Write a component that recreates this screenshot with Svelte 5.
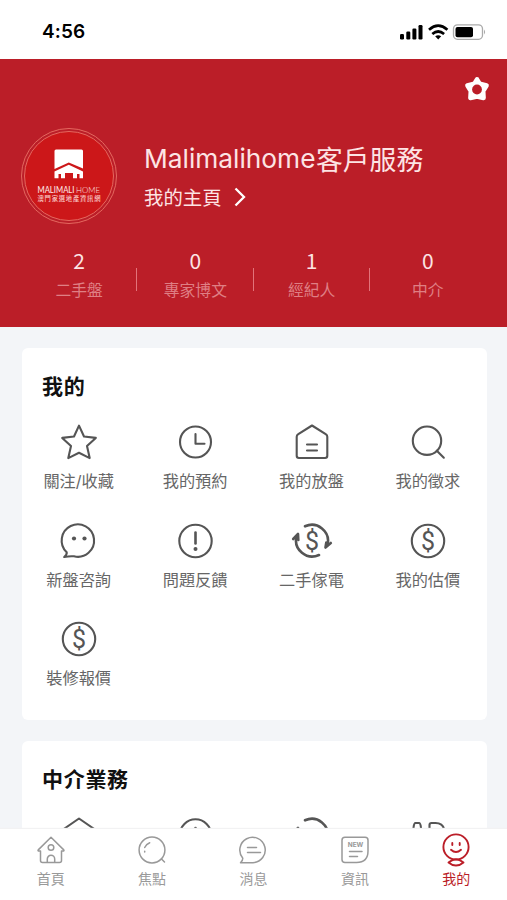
<script lang="ts">
  interface Entry {
    icon: string;
    label: string;
  }

  const stats = [
    { value: 2, label: "二手盤" },
    { value: 0, label: "專家博文" },
    { value: 1, label: "經紀人" },
    { value: 0, label: "中介" },
  ];

  const mine: Entry[] = [
    { icon: "star", label: "關注/收藏" },
    { icon: "clock", label: "我的預約" },
    { icon: "listing", label: "我的放盤" },
    { icon: "search", label: "我的徵求" },
    { icon: "chat", label: "新盤咨詢" },
    { icon: "alert", label: "問題反饋" },
    { icon: "recycle", label: "二手傢電" },
    { icon: "dollar", label: "我的估價" },
    { icon: "dollar", label: "裝修報價" },
  ];

  // only the top of this row shows above the tab bar
  const agency = ["roof", "agent", "cycle", "ad"];

  const tabs: Entry[] = [
    { icon: "home", label: "首頁" },
    { icon: "focus", label: "焦點" },
    { icon: "message", label: "消息" },
    { icon: "news", label: "資訊" },
    { icon: "me", label: "我的" },
  ];

  let active = $state("me");
</script>

{#snippet entryIcon(name: string)}
  <svg class="icon" viewBox="0 0 44 40">
    {#if name === "star"}
      <path d="M22 3.600l5 10.900 11.800 1.400-8.800 8.200 2.700 12L22 30.800l-10.700 5.300 2.700-12-8.800-8.200L17 14.500z" />
    {:else if name === "clock"}
      <circle cx="21.500" cy="20" r="15.500" />
      <path d="M21.500 12v9.800h9" />
    {:else if name === "listing"}
      <path d="M22 3.500L35.700 12.200q1.600 1 1.600 2.600v19q0 2.200-2.200 2.200H8.900q-2.200 0-2.200-2.200v-19q0-1.600 1.600-2.600z" />
      <path d="M17 22.500h10M17 28.500h10" />
    {:else if name === "roof"}
      <path d="M22 3.500L38 14.500v19H6v-19z" />
    {:else if name === "search"}
      <circle cx="21" cy="18.700" r="14.200" />
      <path d="M30.800 28.700l7 7" />
    {:else if name === "chat"}
      <path d="M9.700 31.300A16.200 16.200 0 1 1 17 35.300Q12 35 7.200 36q3-2.500 2.500-4.700z" />
      <circle class="dot" cx="17" cy="17.500" r="2.100" />
      <circle class="dot" cx="27.500" cy="17.500" r="2.100" />
    {:else if name === "alert"}
      <circle cx="21.500" cy="20" r="16.200" />
      <path class="thick" d="M21.500 11.500v11" />
      <circle class="dot" cx="21.500" cy="28" r="2" />
    {:else if name === "recycle"}
      <path class="thick" d="M15 5.300A16.200 16.200 0 0 1 37.600 23.500M29 34A16.200 16.200 0 0 1 6.500 15.500" />
      <path class="thick" d="M3.200 18l4.800-5 .3 6M35.500 26.500l.8-5M35.500 26.500l5.300-4.500" />
      <text x="22" y="28.800">$</text>
    {:else if name === "cycle"}
      <path class="thick" d="M15 5.300A16.200 16.200 0 0 1 37.600 23.500M3.200 18l4.800-5" />
    {:else if name === "dollar"}
      <circle cx="22" cy="20" r="16.200" />
      <text x="22" y="28.800">$</text>
    {:else if name === "agent"}
      <circle cx="21.500" cy="20" r="15.700" />
      <circle class="dot" cx="21.500" cy="13" r="1.300" />
    {:else if name === "ad"}
      <path d="M6 28l1.500-15q.5-5 2-5h3.500q1.500 0 2 5l1.500 15M23.500 28V10q0-2 2-2h4q8 0 9 8" />
    {/if}
  </svg>
{/snippet}

{#snippet tabIcon(name: string)}
  <svg class="tab-icon" viewBox="0 0 32 34">
    {#if name === "home"}
      <path d="M5.500 18H3.500q-1-.4 0-1.400L16 4.300l12.500 12.300q1 1 0 1.400h-2v9.500q0 2-2 2h-17q-2 0-2-2z" />
      <circle cx="16" cy="14.500" r="2.800" />
      <path d="M12.300 29v-3a3.700 3.700 0 0 1 7.400 0v3" />
    {:else if name === "focus"}
      <circle cx="16" cy="17" r="12.900" />
      <path d="M25.500 26l3 3M8.700 14.500a9 9 0 0 1 5-4.800M8.700 18.200v.8" />
    {:else if name === "message"}
      <path d="M5.800 25.200A12.700 12.700 0 1 1 16 29.700H3.500q2.300-2 2.300-4.500z" />
      <path d="M10.500 14.500h9M10.500 19.500h13" />
    {:else if name === "news"}
      <path d="M6 4.300h20q3 0 3 3V18q0 11.500-11.500 11.500H6q-3 0-3-3V7.300q0-3 3-3z" />
      <path d="M10.500 18.500h12.500M10.500 23.500h8" />
      <text x="16.500" y="14">NEW</text>
    {:else if name === "me"}
      <circle cx="16" cy="14" r="12.600" />
      <path d="M12.300 10v2M19.700 10v2M11 16.800q5 4.500 10 0" />
      <path d="M8.500 29.500Q13 26.300 16 26.300t7.500 3.200Q20 32.500 16 32.500t-7.500-3z" />
    {/if}
  </svg>
{/snippet}

<div class="screen">
  <div class="status">
    <span class="time">4:56</span>
    <svg class="signals" width="88" height="18" viewBox="0 0 88 18">
      <rect x="1" y="11" width="4" height="5.500" rx="1.200" />
      <rect x="7.300" y="8.500" width="4" height="8" rx="1.200" />
      <rect x="13.400" y="5.500" width="4" height="11" rx="1.200" />
      <rect x="19.500" y="2" width="4" height="14.500" rx="1.200" />
      <path class="wave" d="M30 6.700q9.200-8 18.400 0M33.300 11q5.900-5 11.800 0" />
      <path d="M36.200 13.300q3-2 6 0l-3 3.200z" />
      <rect class="case" x="54.500" y="1.800" width="29" height="14.500" rx="4" />
      <rect x="56.500" y="3.900" width="17.500" height="10.300" rx="2" />
      <path class="tip" d="M85 6.500q2.200 2.500 0 5z" />
    </svg>
  </div>

  <header>
    <div class="tools">
      <svg width="28" height="28" viewBox="0 0 28 28">
        <path class="gear" d="M14 4.300l2.600 4.400 7 1.800-3.400 5.500.4 7-6.600-1.500L7.400 23l.4-7-3.400-5.500 7-1.800z" />
        <circle class="hole" cx="14" cy="14.500" r="4.900" />
      </svg>
    </div>

    <div class="profile">
      <svg class="avatar" width="98" height="98" viewBox="0 0 98 98">
        <circle class="ring" cx="49" cy="49" r="47.500" />
        <circle class="disc" cx="49" cy="49" r="44.500" />
        <path class="mark" d="M36 22.500h25.500q1.500 0 1.500 1.500v17.500L48.800 35.500 34.500 42V24q0-1.500 1.500-1.500z" />
        <path class="mark" d="M34.500 44.500L48.800 37.700 63 44.500v6.800h-3.500V47H57v4.300h-4V46h-8v5.300h-4V47h-2.500v4.300h-4z" />
        <text class="brand" x="17.500" y="66" textLength="37" lengthAdjust="spacingAndGlyphs">MALIMALI</text>
        <text class="brand thin" x="56" y="66" textLength="24" lengthAdjust="spacingAndGlyphs">HOME</text>
        <text class="slogan" x="17.500" y="73.500" textLength="63">澳門家選地產資訊網</text>
      </svg>
      <div class="who">
        <div class="name"><span class="latin">Malimalihome</span><span>客戶服務</span></div>
        <div class="link">
          我的主頁
          <svg width="14" height="22" viewBox="0 0 14 22"><path d="M2.500 2.500l8.500 8.500-8.500 8.500" /></svg>
        </div>
      </div>
    </div>

    <div class="stats">
      {#each stats as stat (stat.label)}
        <div class="stat">
          <span class="value">{stat.value}</span>
          <span class="caption">{stat.label}</span>
        </div>
      {/each}
    </div>
  </header>

  <main>
    <section class="card">
      <h2>我的</h2>
      <div class="grid">
        {#each mine as entry (entry.label)}
          <div class="entry">
            {@render entryIcon(entry.icon)}
            <span>{entry.label}</span>
          </div>
        {/each}
      </div>
    </section>

    <section class="card">
      <h2>中介業務</h2>
      <div class="grid">
        {#each agency as icon (icon)}
          <div class="entry">{@render entryIcon(icon)}</div>
        {/each}
      </div>
    </section>
  </main>

  <nav>
    {#each tabs as tab (tab.icon)}
      <button class:active={active === tab.icon} onclick={() => (active = tab.icon)}>
        {@render tabIcon(tab.icon)}
        <span>{tab.label}</span>
      </button>
    {/each}
  </nav>
</div>

<style>
  :global(body) {
    margin: 0;
  }
  .screen {
    display: flex;
    flex-direction: column;
    height: 900px;
    overflow: hidden;
    background: #f3f5f8;
    font-family: Inter, "Noto Sans CJK TC", sans-serif;
  }
  svg {
    display: block;
    flex: none;
  }
  .status {
    display: flex;
    justify-content: space-between;
    align-items: center;
    box-sizing: border-box;
    flex: none;
    height: 59px;
    padding: 4px 20px 0 42px;
    background: #fff;
  }
  .time {
    font-size: 19px;
    font-weight: 600;
    letter-spacing: 0.1px;
  }
  .wave {
    fill: none;
    stroke: #000;
    stroke-width: 2.7;
  }
  .case {
    fill: none;
    stroke: #aaa;
    stroke-width: 1.3;
  }
  .tip {
    fill: #aaa;
  }
  header {
    box-sizing: border-box;
    flex: none;
    height: 268px;
    background: #bb1e28;
    color: #fde4e4;
  }
  .tools {
    display: flex;
    justify-content: flex-end;
    padding: 16px 16.5px 0 0;
  }
  .gear {
    fill: #fff;
    stroke: #fff;
    stroke-width: 4.5;
    stroke-linejoin: round;
  }
  .hole {
    fill: #bb1e28;
  }
  .profile {
    display: flex;
    gap: 26px;
    padding: 24px 0 0 20px;
  }
  .ring {
    fill: none;
    stroke: #e5685f;
    stroke-width: 1;
  }
  .disc {
    fill: #cc1719;
    stroke: #e5685f;
    stroke-width: 1;
  }
  .mark {
    fill: #fff;
  }
  .brand {
    fill: #fde4e4;
    font: 500 8.5px Lato, sans-serif;
  }
  .brand.thin {
    font-weight: 300;
  }
  .slogan {
    fill: #f9c9c5;
    font: 500 6.3px "Noto Sans CJK TC", sans-serif;
  }
  .who {
    padding-top: 13.5px;
  }
  .name {
    display: flex;
    align-items: center;
    height: 36px;
    font-size: 26.8px;
    white-space: nowrap;
  }
  .latin {
    width: 172px;
    font-size: 26.3px;
    letter-spacing: 0;
  }
  .link {
    display: flex;
    align-items: center;
    gap: 11px;
    height: 40px;
    font-size: 19.4px;
  }
  .link path {
    fill: none;
    stroke: #fff;
    stroke-width: 2.3;
  }
  .stats {
    display: grid;
    grid-template-columns: repeat(4, 1fr);
    padding: 21px 21px 0;
  }
  .stat {
    display: flex;
    flex-direction: column;
    align-items: center;
    position: relative;
  }
  .stat + .stat::before {
    content: "";
    position: absolute;
    left: -1px;
    top: 22px;
    width: 1px;
    height: 23px;
    background: #e2737a;
  }
  .value {
    font-size: 21px;
    line-height: 28px;
    font-family: "Noto Sans CJK TC", sans-serif;
  }
  .caption {
    font-size: 15.8px;
    line-height: 33px;
    color: #df7f84;
  }
  main {
    display: flex;
    flex-direction: column;
    flex: 1;
    gap: 21px;
    min-height: 0;
    overflow: hidden;
    padding: 21px 20.5px 0 21.5px;
  }
  .card {
    box-sizing: border-box;
    flex: none;
    height: 372px;
    border-radius: 6px;
    background: #fff;
  }
  h2 {
    margin: 0;
    padding: 23.5px 0 0 20.5px;
    font-size: 21px;
    font-weight: 700;
    line-height: 30px;
    letter-spacing: 0.7px;
    color: #111;
  }
  .grid {
    display: grid;
    grid-template-columns: repeat(4, 116.4px);
    grid-auto-rows: 98.7px;
    margin: 20.5px 0 0 -0.5px;
  }
  .entry {
    display: flex;
    flex-direction: column;
    align-items: center;
    font-size: 16.2px;
    line-height: 24px;
    gap: 7px;
    color: #666;
  }
  .entry span {
    margin-left: -1px;
  }
  .icon {
    width: 44px;
    height: 40px;
    fill: none;
    stroke: #555;
    stroke-width: 2.1;
    stroke-linecap: round;
    stroke-linejoin: round;
  }
  .icon text {
    fill: #555;
    stroke: none;
    font: 400 25px Roboto, sans-serif;
    text-anchor: middle;
  }
  .thick {
    stroke-width: 2.6;
  }
  .dot {
    fill: #555;
    stroke: none;
  }
  nav {
    display: grid;
    grid-template-columns: repeat(5, 1fr);
    box-sizing: border-box;
    flex: none;
    height: 71.5px;
    padding-top: 4.5px;
    background: #fff;
    box-shadow: 0 -1px 1px #f2f2f3;
  }
  button {
    display: flex;
    flex-direction: column;
    align-items: center;
    padding: 0;
    border: 0;
    background: none;
    color: #999;
    font: 14px/22px "Noto Sans CJK TC", sans-serif;
  }
  button.active {
    color: #bb1e28;
  }
  .tab-icon {
    width: 32px;
    height: 34px;
    fill: none;
    stroke: currentColor;
    stroke-width: 1.5;
    stroke-linecap: round;
    stroke-linejoin: round;
  }
  .active .tab-icon {
    stroke-width: 1.9;
  }
  .tab-icon text {
    fill: currentColor;
    stroke: none;
    font: 700 6.5px Inter, sans-serif;
    text-anchor: middle;
  }
</style>
